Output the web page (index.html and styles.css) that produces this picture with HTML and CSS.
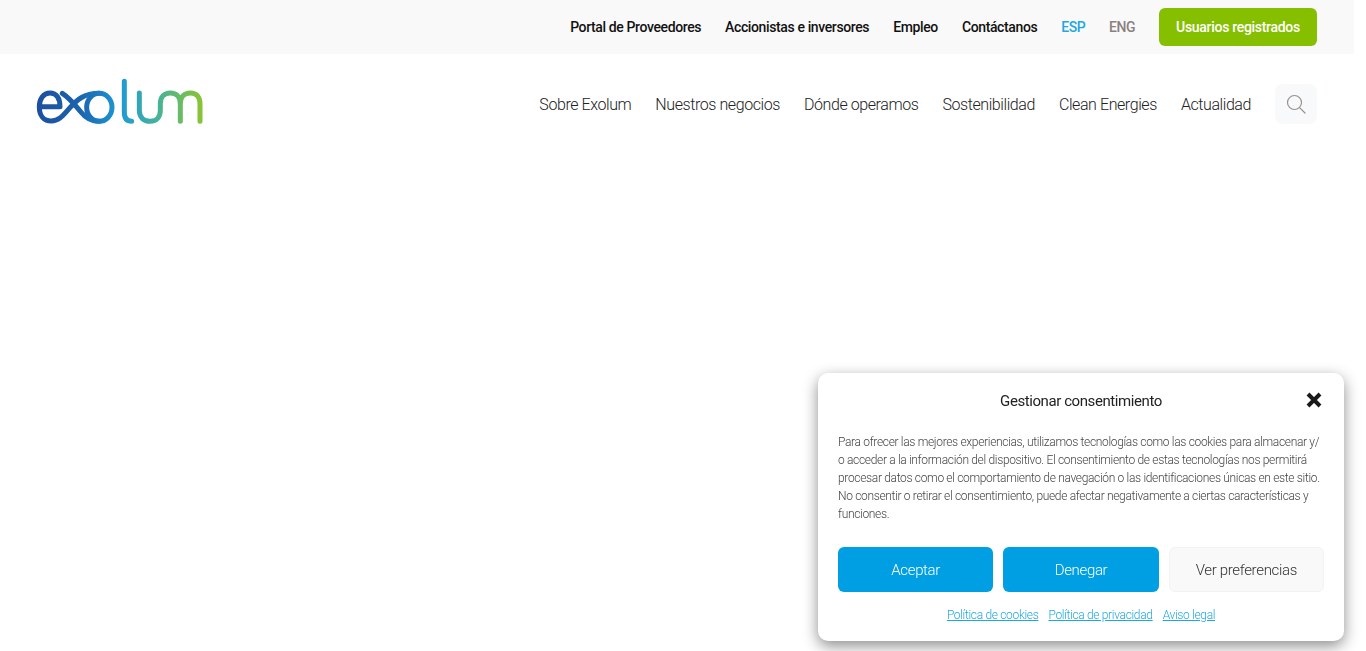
FILE: index.html
```html
<!DOCTYPE html>
<html lang="es">
<head>
  <meta charset="UTF-8" />
  <title>Exolum</title>
  <meta name="viewport" content="width=device-width, initial-scale=1.0"/>
  <link rel="stylesheet" href="styles.css">
</head>
<body>
  <div class="page">
    <div class="top-bar">
      <a href="#" class="top-link">Portal de Proveedores</a>
      <a href="#" class="top-link">Accionistas e inversores</a>
      <a href="#" class="top-link">Empleo</a>
      <a href="#" class="top-link">Contáctanos</a>
      <a href="#" class="top-link lang-on">ESP</a>
      <a href="#" class="top-link lang-off">ENG</a>
      <a href="#" class="users-btn">Usuarios registrados</a>
    </div>

    <header class="main-nav">
      <a href="#" class="logo" aria-label="Exolum">
        <svg width="200" height="70" viewBox="0 0 600 210" fill="none">
          <defs>
            <linearGradient id="logoGrad" gradientUnits="userSpaceOnUse" x1="50" y1="0" x2="550" y2="0">
              <stop offset="0" stop-color="#1c4f9f"/>
              <stop offset="0.25" stop-color="#1a62ae"/>
              <stop offset="0.5" stop-color="#1e9ad6"/>
              <stop offset="0.72" stop-color="#45b29b"/>
              <stop offset="1" stop-color="#8cc431"/>
            </linearGradient>
          </defs>
          <g stroke="url(#logoGrad)" stroke-width="15" stroke-linecap="round" stroke-linejoin="round">
            <path d="M60 125 H120 C120 100 110 84 90 84 C70 84 58 102 58 126 C58 152 72 168 94 168 C118 168 130 150 150 128 C170 106 190 85 238 85"/>
            <path d="M127 85 C150 100 165 120 182 140 C196 158 215 169 238 169"/>
            <ellipse cx="238" cy="127" rx="38" ry="42"/>
            <path d="M313 49 V142 C313 160 320 169 335 169"/>
            <path d="M358 84 V136 C358 158 372 169 391 169 C409 169 421 156 421 136 V116 C421 96 433 84 451 84 C470 84 481 96 481 116 V169 M481 116 C481 96 493 84 511 84 C530 84 540 96 540 116 V169"/>
          </g>
        </svg>
      </a>
      <nav class="nav-links">
        <a href="#">Sobre Exolum</a>
        <a href="#">Nuestros negocios</a>
        <a href="#">Dónde operamos</a>
        <a href="#">Sostenibilidad</a>
        <a href="#">Clean Energies</a>
        <a href="#">Actualidad</a>
      </nav>
      <button class="search-btn" aria-label="Buscar">
        <svg width="20" height="20" viewBox="0 0 20 20" fill="none" stroke="#9a9090" stroke-width="1.2" stroke-linecap="round">
          <circle cx="8.5" cy="8.5" r="7"/>
          <path d="M13.6 13.6 L19 19"/>
        </svg>
      </button>
    </header>
  </div>

  <div class="cookie-box">
    <div class="cookie-head">
      <span class="cookie-title">Gestionar consentimiento</span>
      <svg class="cookie-close" width="16" height="16" viewBox="0 0 16 16" fill="none" stroke="#1a1a1a" stroke-width="4">
        <path d="M2 2 L14 14 M14 2 L2 14"/>
      </svg>
    </div>
    <p class="cookie-text">Para ofrecer las mejores experiencias, utilizamos tecnologías como las cookies para almacenar y/<br>o acceder a la información del dispositivo. El consentimiento de estas tecnologías nos permitirá<br>procesar datos como el comportamiento de navegación o las identificaciones únicas en este sitio.<br>No consentir o retirar el consentimiento, puede afectar negativamente a ciertas características y<br>funciones.</p>
    <div class="cookie-btns">
      <button class="btn-blue">Aceptar</button>
      <button class="btn-blue">Denegar</button>
      <button class="btn-grey">Ver preferencias</button>
    </div>
    <div class="cookie-links">
      <a href="#">Política de cookies</a>
      <a href="#">Política de privacidad</a>
      <a href="#">Aviso legal</a>
    </div>
  </div>
</body>
</html>
```

FILE: styles.css
```css
body {
  margin: 0;
  font-family: Roboto, 'Open Sans', sans-serif;
  background: #fff;
  color: #222;
  height: 651px;
  overflow: hidden;
}
a { text-decoration: none; }
.page { width: 1354px; }

.top-bar {
  height: 54px;
  background: #f9f9f9;
  display: flex;
  justify-content: flex-end;
  align-items: center;
  gap: 24px;
  padding-right: 37px;
  box-sizing: border-box;
}
.top-link {
  font-size: 14px;
  font-weight: 500;
  color: #111;
  letter-spacing: -0.38px;
}
.lang-on { color: #1ea7e1; letter-spacing: -0.5px; }
.lang-off { color: #8a8080; letter-spacing: -0.5px; }
.users-btn {
  width: 158px;
  height: 38px;
  line-height: 38px;
  text-align: center;
  background: #85bf00;
  color: #fff;
  border-radius: 6px;
  font-size: 14px;
  font-weight: 500;
  letter-spacing: -0.3px;
}

.main-nav {
  height: 100px;
  display: flex;
  align-items: center;
  padding: 0 37px 0 20px;
  box-sizing: border-box;
}
.logo { display: block; height: 70px; margin-bottom: 8px; }
.nav-links {
  margin-left: auto;
  display: flex;
  gap: 24px;
}
.nav-links a {
  font-size: 16px;
  font-weight: 300;
  color: #222;
  letter-spacing: -0.42px;
}
.search-btn {
  width: 42px;
  height: 40px;
  margin-left: 24px;
  background: #f8f9fa;
  border: none;
  border-radius: 8px;
  padding: 0;
  display: flex;
  align-items: center;
  justify-content: center;
}

.cookie-box {
  position: fixed;
  right: 22px;
  bottom: 10px;
  width: 526px;
  height: 268px;
  box-sizing: border-box;
  padding: 0 20px;
  background: #fff;
  border-radius: 10px;
  box-shadow: 0 5px 15px rgba(0,0,0,0.45);
}
.cookie-head {
  height: 55px;
  display: flex;
  align-items: center;
  justify-content: center;
  position: relative;
}
.cookie-title { font-size: 15px; color: #222; letter-spacing: -0.42px; }
.cookie-close {
  position: absolute;
  right: 2px;
  top: 19px;
}
.cookie-text {
  margin: 5px 0 0;
  font-size: 12px;
  line-height: 18px;
  color: #444;
  font-weight: 300;
  letter-spacing: -0.33px;
  white-space: nowrap;
}
.cookie-btns {
  margin-top: 24px;
  display: grid;
  grid-template-columns: repeat(3, 1fr);
  gap: 10px;
}
.cookie-btns button {
  height: 45px;
  border-radius: 6px;
  font-family: inherit;
  font-size: 15px;
  font-weight: 300;
  letter-spacing: -0.33px;
  padding: 0;
}
.btn-blue {
  background: #009fe3;
  color: #fff;
  border: none;
}
.btn-grey {
  background: #f9f9f9;
  color: #333;
  border: 1px solid #f2f2f2;
}
.cookie-links {
  margin-top: 16px;
  display: flex;
  justify-content: center;
  gap: 10px;
}
.cookie-links a {
  font-size: 12px;
  font-weight: 300;
  color: #1ea7e1;
  text-decoration: underline;
  letter-spacing: -0.33px;
}
```
